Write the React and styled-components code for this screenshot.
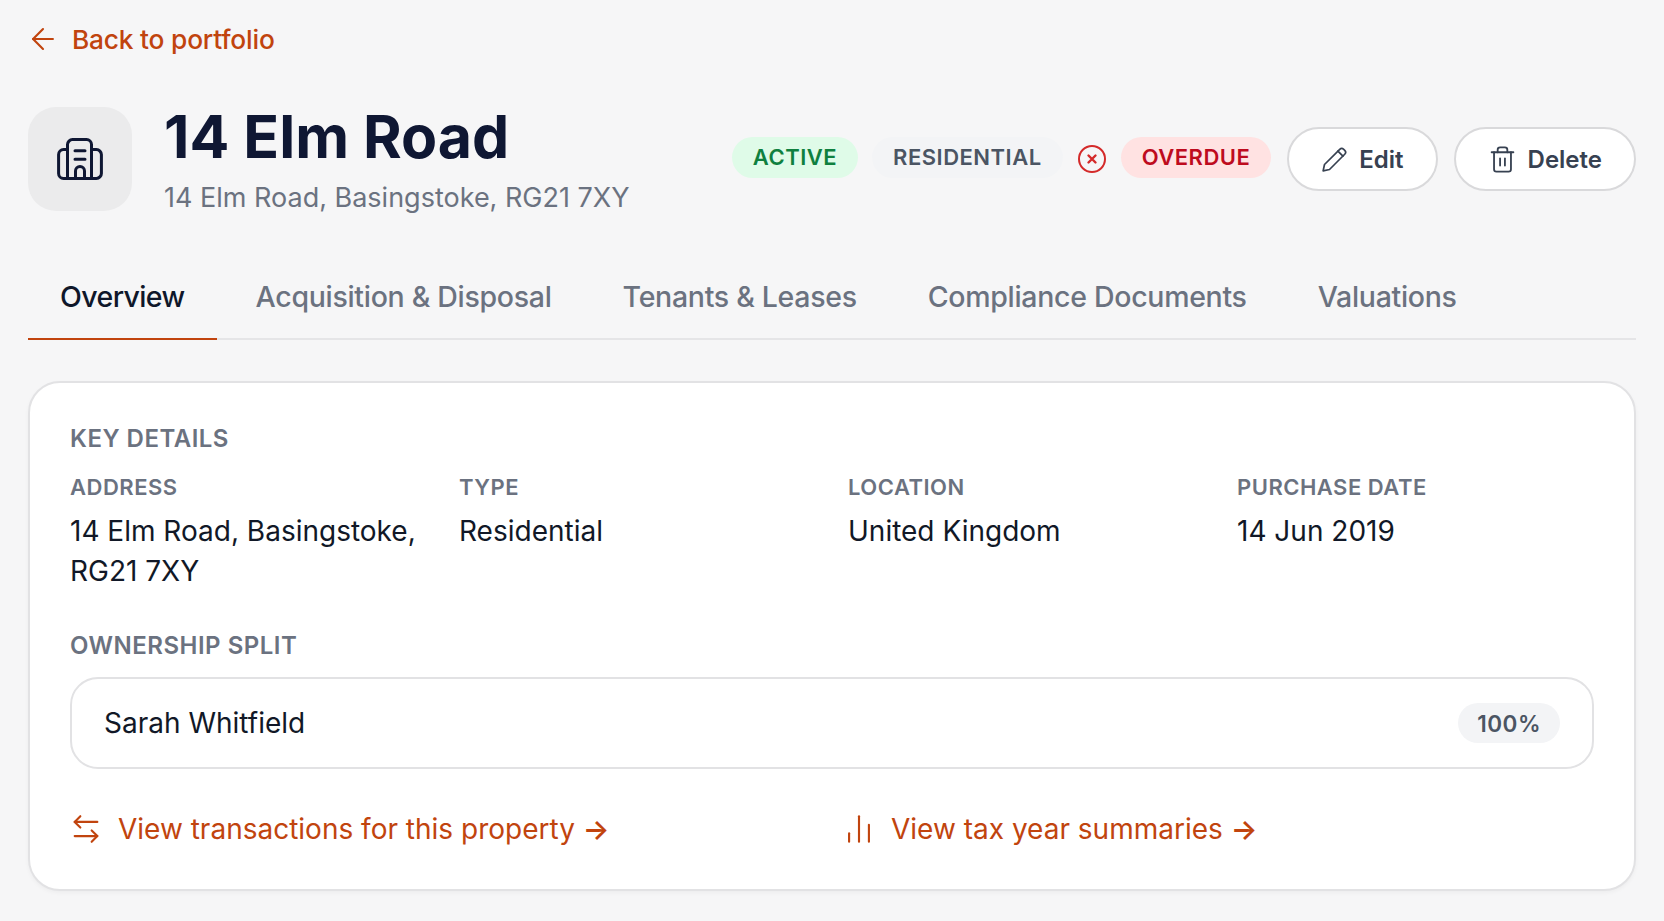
import { createGlobalStyle, styled } from 'styled-components';
import { ArrowLeft, Trash2, ArrowLeftRight, BarChart2 } from 'lucide-react';

const Global = createGlobalStyle`
html, body { margin: 0; padding: 0; background: #f6f6f7; }
body { font-family: Inter, "Liberation Sans", sans-serif; color: #0f172a; }
`

const Page = styled.div`
width: 1664px;
height: 921px;
box-sizing: border-box;
padding: 20px 28px 0 28px;
overflow: hidden;
`
const BackLink = styled.a`
display: flex;
align-items: center;
gap: 12px;
height: 38px;
margin-left: -2px;
color: #c1440e;
font-size: 26.3px;
font-weight: 500;
letter-spacing: -0.2px;
`
const Header = styled.div`
display: flex;
align-items: center;
justify-content: space-between;
margin-top: 45px;
`
const TitleGroup = styled.div`
display: flex;
align-items: center;
gap: 32px;
`
const IconBox = styled.div`
width: 104px;
height: 104px;
border-radius: 28px;
background: #ebebec;
display: flex;
align-items: center;
justify-content: center;
color: #0f1733;
`
const TitleText = styled.div`
padding-top: 2px;
`
const Title = styled.h1`
margin: 0;
font-size: 59px;
line-height: 64px;
font-weight: 700;
color: #0f1733;
`
const Subtitle = styled.div`
margin-top: 12px;
font-size: 27px;
line-height: 34px;
color: #6b7280;
`
const Actions = styled.div`
display: flex;
align-items: center;
gap: 16px;
`
const Badges = styled.div`
display: flex;
align-items: center;
gap: 14px;
`
const OverdueGroup = styled.div`
display: flex;
align-items: center;
gap: 14px;
`
const Badge = styled.span`
display: inline-flex;
align-items: center;
box-sizing: border-box;
height: 41px;
margin-bottom: 3px;
padding: 0 21px 2px;
border-radius: 21px;
font-size: 22px;
font-weight: 600;
letter-spacing: 0.5px;
background: ${(p) => p.$bg};
color: ${(p) => p.$color};
`
const Button = styled.button`
display: inline-flex;
align-items: center;
justify-content: center;
gap: 12px;
height: 64px;
padding: 0 32px 0 33px;
box-sizing: border-box;
border: 2px solid #d9d9db;
border-radius: 32px;
background: #fff;
color: #374151;
font-family: inherit;
font-size: 24px;
font-weight: 600;
`
const TrashIcon = styled(Trash2)`
margin: 0 -1px;
`
const Tabs = styled.div`
display: flex;
gap: 7px;
margin-top: 44px;
border-bottom: 2px solid #e5e5e7;
`
const Tab = styled.div`
padding: 0 32px 4px;
height: 81px;
box-sizing: border-box;
display: flex;
align-items: center;
font-size: 28.5px;
font-weight: 500;
letter-spacing: ${(p) => (p.$active ? '-0.6px' : '-0.3px')};
margin-bottom: -2px;
color: ${(p) => (p.$active ? '#0f172a' : '#6b7280')};
border-bottom: 2px solid ${(p) => (p.$active ? '#c1440e' : 'transparent')};
`
const Card = styled.div`
margin-top: 41px;
background: #fff;
border: 2px solid #e2e2e4;
border-radius: 32px;
padding: 42px 40px 40px;
box-sizing: border-box;
height: 510px;
box-shadow: 0 2px 4px rgba(0, 0, 0, 0.04);
`
const SectionLabel = styled.div`
font-size: 24px;
line-height: 28px;
font-weight: 600;
letter-spacing: 0.5px;
color: #6b7280;
`
const DetailGrid = styled.div`
display: grid;
grid-template-columns: repeat(4, 1fr);
gap: 32px;
margin-top: 20px;
`
const DetailLabel = styled.div`
font-size: 22px;
line-height: 28px;
font-weight: 600;
letter-spacing: 0.5px;
color: #6b7280;
`
const DetailValue = styled.div`
margin-top: 10px;
font-size: 28px;
line-height: 40px;
color: #111827;
`
const OwnershipLabel = styled(SectionLabel)`
margin-top: 41px;
`
const OwnerRow = styled.div`
display: flex;
align-items: center;
justify-content: space-between;
height: 92px;
box-sizing: border-box;
margin-top: 17px;
padding: 0 32px;
border: 2px solid #e2e2e4;
border-radius: 28px;
font-size: 28px;
color: #111827;
`
const Percent = styled.span`
display: inline-flex;
align-items: center;
height: 40px;
padding: 0 19px;
border-radius: 20px;
background: #f3f4f6;
color: #4b5563;
font-size: 22.5px;
font-weight: 600;
letter-spacing: 0.5px;
`
const Links = styled.div`
display: grid;
grid-template-columns: repeat(2, 1fr);
gap: 22px;
margin-top: 40px;
`
const TextLink = styled.a`
display: flex;
align-items: center;
gap: 15px;
margin-left: -1px;
color: #c1440e;
font-size: 28px;
line-height: 40px;
`
const LinkArrow = styled.span`
font-weight: 600;
`

const BuildingIcon = () => (
  <svg width="48" height="48" viewBox="0 0 48 48" fill="none" stroke="currentColor" strokeWidth="3" strokeLinecap="round" strokeLinejoin="round">
    <path d="M11.5 43.4V9.6a5 5 0 0 1 5-5h14a5 5 0 0 1 5 5v33.8" />
    <path d="M11.5 14.6H7.6a5 5 0 0 0-5 5v18.8a5 5 0 0 0 5 5h32.8a5 5 0 0 0 5-5V19.6a5 5 0 0 0-5-5h-4.9" />
    <path d="M19 15.7h10M19 24.3h10" />
    <path d="M19.5 43v-7a4.5 4.5 0 0 1 9 0v7" />
  </svg>
);

const CircleX = () => (
  <svg width="30" height="30" viewBox="0 0 30 30" fill="none" stroke="#d42a2a" strokeWidth="2" strokeLinecap="round">
    <circle cx="15" cy="15" r="13" />
    <path d="M11.5 11.5l7 7M18.5 11.5l-7 7" strokeWidth="2.4" />
  </svg>
);

const PencilIcon = () => (
  <svg width="25" height="25" viewBox="2 2 22 22" fill="none" stroke="currentColor" strokeWidth="1.5" strokeLinecap="round" strokeLinejoin="round">
    <path d="M3 23l1.2-5.6L17.6 4a2.5 2.5 0 0 1 3.5 0l.9.9a2.5 2.5 0 0 1 0 3.5L8.6 21.8 3 23z" />
    <path d="M16 5.6l4.4 4.4" />
  </svg>
);

export default function App() {
  return (
    <Page>
      <Global />
      <BackLink><ArrowLeft size={34} strokeWidth={1.5} />Back to portfolio</BackLink>
      <Header>
        <TitleGroup>
          <IconBox><BuildingIcon /></IconBox>
          <TitleText>
            <Title>14 Elm Road</Title>
            <Subtitle>14 Elm Road, Basingstoke, RG21 7XY</Subtitle>
          </TitleText>
        </TitleGroup>
        <Actions>
          <Badges>
            <Badge $bg="#dffbe8" $color="#0f803f">ACTIVE</Badge>
            <Badge $bg="#f3f4f6" $color="#4b5563">RESIDENTIAL</Badge>
            <OverdueGroup>
              <CircleX />
              <Badge $bg="#ffe2e2" $color="#be0b1e">OVERDUE</Badge>
            </OverdueGroup>
          </Badges>
          <Button><PencilIcon />Edit</Button>
          <Button><TrashIcon size={29} strokeWidth={1.5} />Delete</Button>
        </Actions>
      </Header>
      <Tabs>
        <Tab $active>Overview</Tab>
        <Tab>Acquisition &amp; Disposal</Tab>
        <Tab>Tenants &amp; Leases</Tab>
        <Tab>Compliance Documents</Tab>
        <Tab>Valuations</Tab>
      </Tabs>
      <Card>
        <SectionLabel>KEY DETAILS</SectionLabel>
        <DetailGrid>
          <div><DetailLabel>ADDRESS</DetailLabel><DetailValue>14 Elm Road, Basingstoke, RG21 7XY</DetailValue></div>
          <div><DetailLabel>TYPE</DetailLabel><DetailValue>Residential</DetailValue></div>
          <div><DetailLabel>LOCATION</DetailLabel><DetailValue>United Kingdom</DetailValue></div>
          <div><DetailLabel>PURCHASE DATE</DetailLabel><DetailValue>14 Jun 2019</DetailValue></div>
        </DetailGrid>
        <OwnershipLabel>OWNERSHIP SPLIT</OwnershipLabel>
        <OwnerRow>Sarah Whitfield<Percent>100%</Percent></OwnerRow>
        <Links>
          <TextLink><ArrowLeftRight size={34} strokeWidth={1.5} /><span>View transactions for this property <LinkArrow>→</LinkArrow></span></TextLink>
          <TextLink><BarChart2 size={34} strokeWidth={1.5} /><span>View tax year summaries <LinkArrow>→</LinkArrow></span></TextLink>
        </Links>
      </Card>
    </Page>
  );
}
